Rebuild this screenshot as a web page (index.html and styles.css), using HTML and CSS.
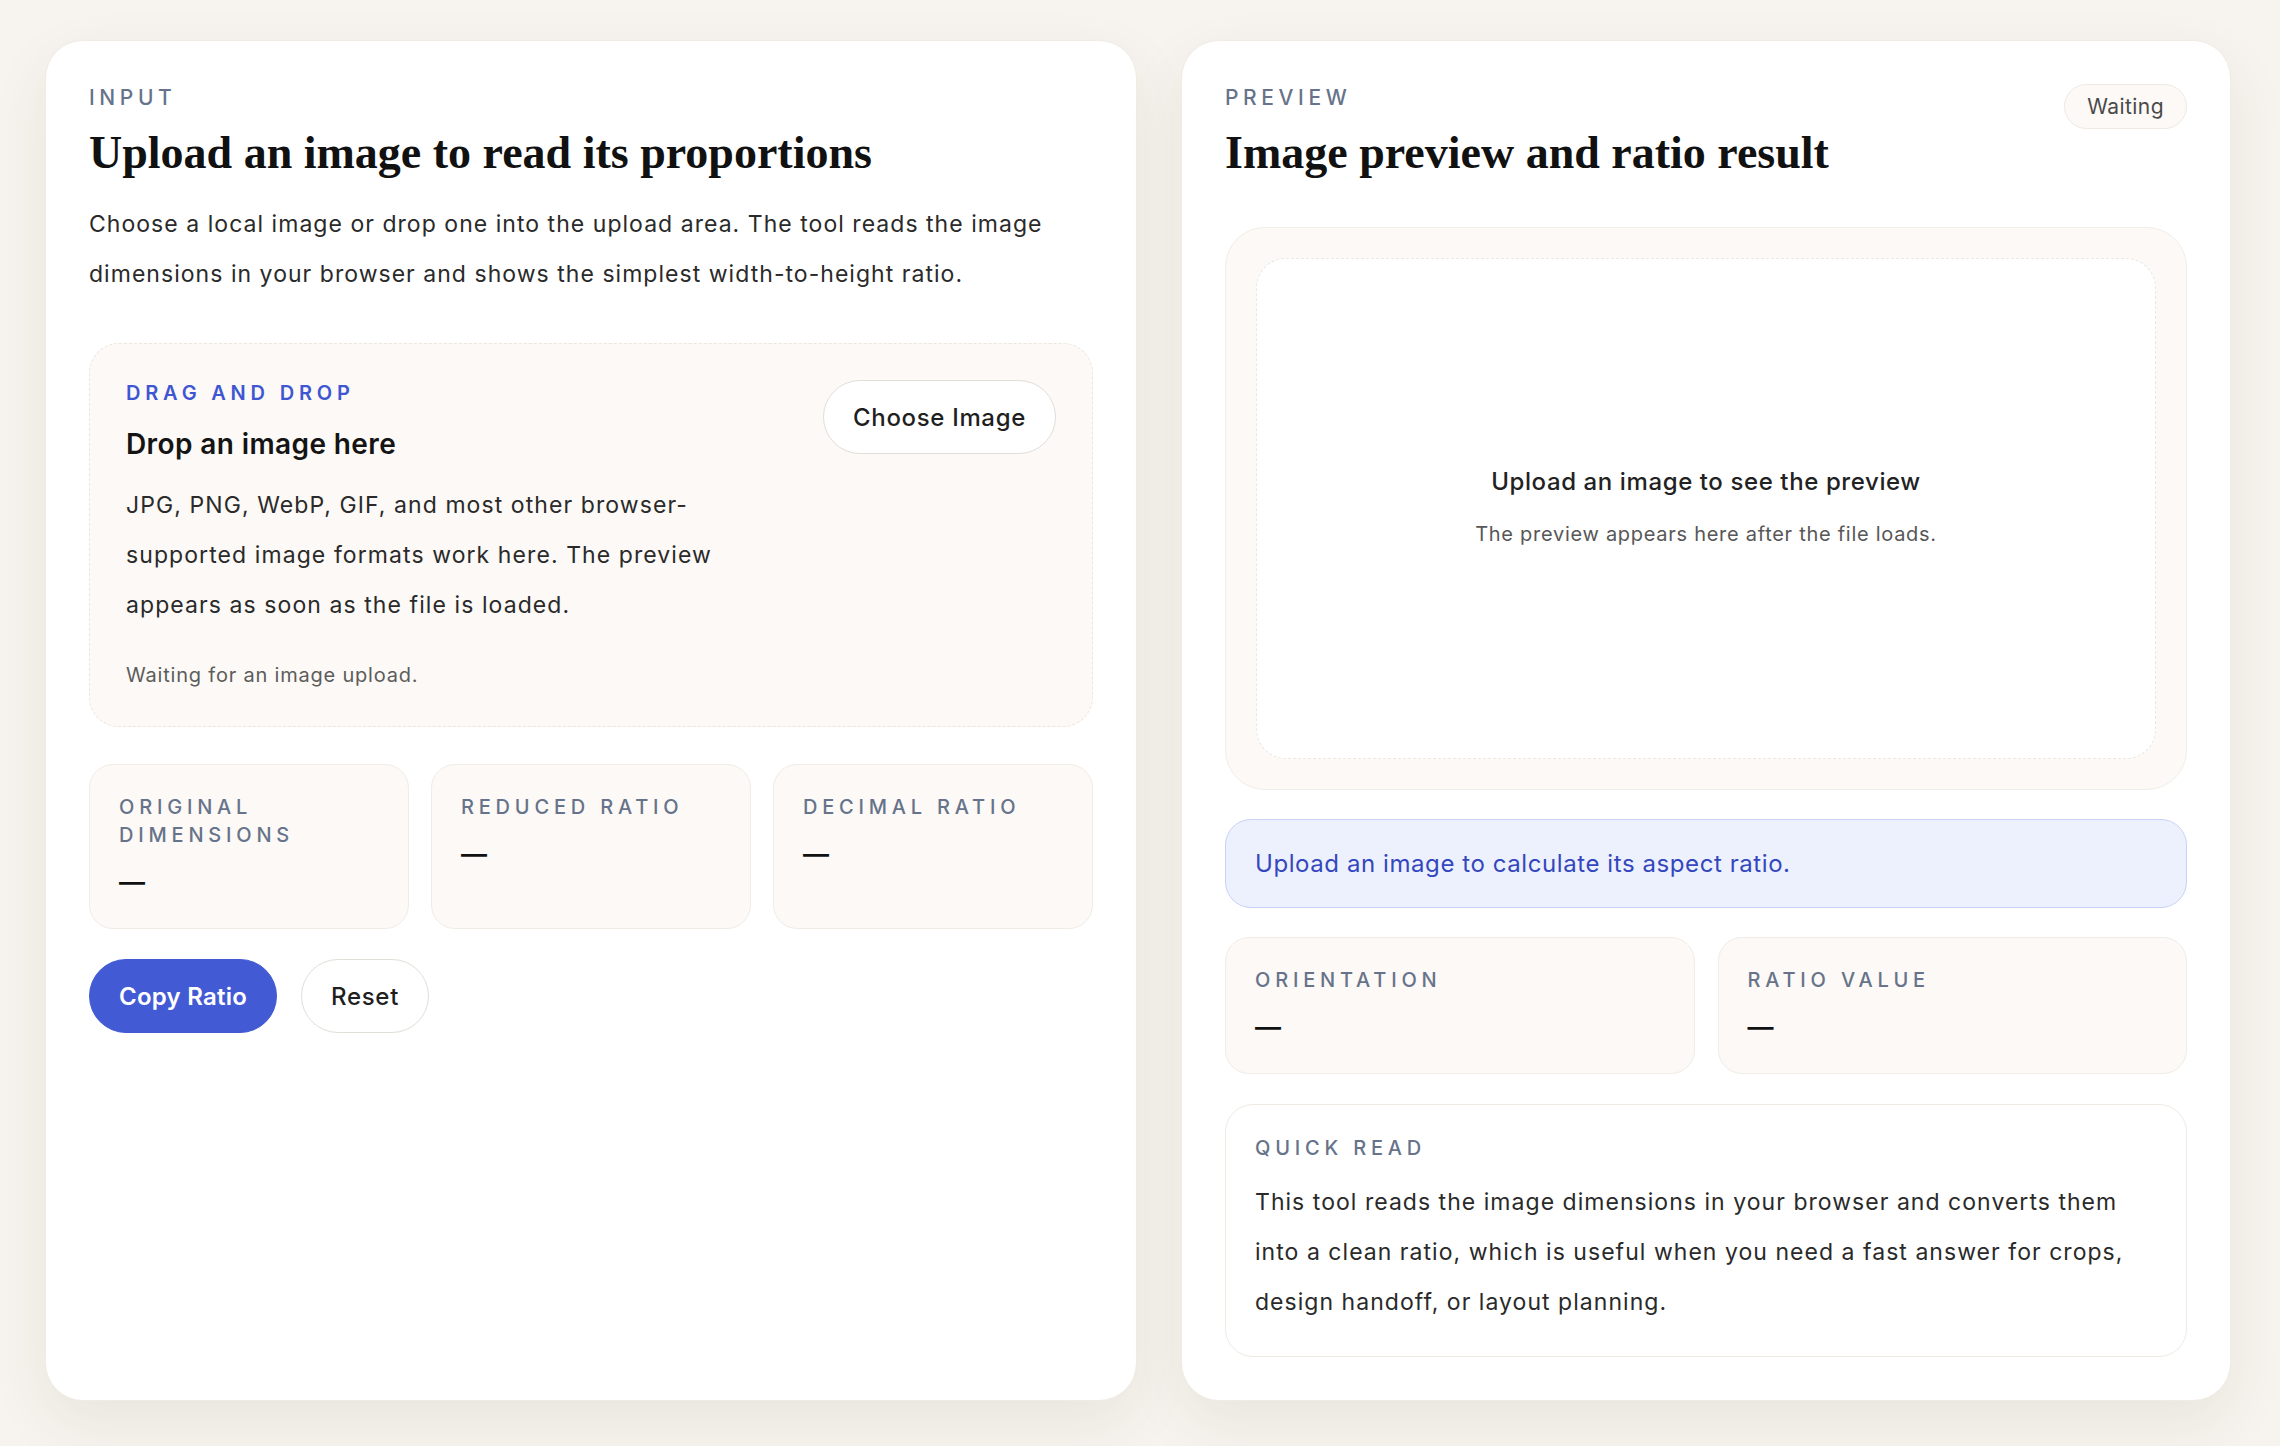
FILE: index.html
```html
<!DOCTYPE html>
<html>
<head>
  <title>Image Aspect Ratio Reader</title>
  <link rel="stylesheet" href="styles.css">
</head>
<body>
  <main class="layout">
    <section class="panel">
      <p class="eyebrow">Input</p>
      <h1 class="title">Upload an image to read its proportions</h1>
      <p class="lead">Choose a local image or drop one into the upload area. The tool reads the image dimensions in your browser and shows the simplest width-to-height ratio.</p>

      <div class="dropzone">
        <div class="dropzone-copy">
          <p class="drop-label">Drag and drop</p>
          <h3 class="drop-title">Drop an image here</h3>
          <p class="drop-text">JPG, PNG, WebP, GIF, and most other browser-supported image formats work here. The preview appears as soon as the file is loaded.</p>
          <p class="drop-status">Waiting for an image upload.</p>
        </div>
        <button class="btn btn-light">Choose Image</button>
      </div>

      <div class="stats stats-3">
        <div class="stat">
          <p class="stat-label">Original dimensions</p>
          <p class="stat-value">—</p>
        </div>
        <div class="stat">
          <p class="stat-label">Reduced ratio</p>
          <p class="stat-value">—</p>
        </div>
        <div class="stat">
          <p class="stat-label">Decimal ratio</p>
          <p class="stat-value">—</p>
        </div>
      </div>

      <div class="actions">
        <button class="btn btn-primary">Copy Ratio</button>
        <button class="btn btn-light">Reset</button>
      </div>
    </section>

    <section class="panel">
      <div class="panel-head">
        <div>
          <p class="eyebrow">Preview</p>
          <h2 class="title">Image preview and ratio result</h2>
        </div>
        <span class="badge">Waiting</span>
      </div>

      <div class="preview">
        <div class="preview-frame">
          <p class="preview-title">Upload an image to see the preview</p>
          <p class="preview-text">The preview appears here after the file loads.</p>
        </div>
      </div>

      <div class="notice">Upload an image to calculate its aspect ratio.</div>

      <div class="stats stats-2">
        <div class="stat">
          <p class="stat-label">Orientation</p>
          <p class="stat-value">—</p>
        </div>
        <div class="stat">
          <p class="stat-label">Ratio value</p>
          <p class="stat-value">—</p>
        </div>
      </div>

      <div class="note">
        <p class="stat-label">Quick read</p>
        <p class="note-text">This tool reads the image dimensions in your browser and converts them into a clean ratio, which is useful when you need a fast answer for crops, design handoff, or layout planning.</p>
      </div>
    </section>
  </main>
</body>
</html>
```

FILE: styles.css
```css
* {
  box-sizing: border-box;
}

body {
  margin: 0;
  background: #f7f4ef;
  color: #1c1c1c;
  font-family: 'Inter', 'Noto Sans', sans-serif;
}

p,
h1,
h2,
h3 {
  margin: 0;
}

.layout {
  display: grid;
  grid-template-columns: minmax(0, 1.04fr) minmax(0, 1fr);
  gap: 44px;
  padding: 40px 49px 46px 45px;
}

.panel {
  background: #fff;
  border: 1px solid #f0ebe3;
  border-radius: 38px;
  padding: 43px;
  box-shadow: 0 22px 60px rgba(70, 55, 30, 0.08);
}

.eyebrow {
  font-size: 21px;
  line-height: 27px;
  font-weight: 500;
  letter-spacing: 0.22em;
  text-transform: uppercase;
  color: #66738a;
}

.title {
  margin-top: 14px;
  font-family: 'Liberation Serif', 'Times New Roman', serif;
  font-weight: 700;
  font-size: 46px;
  line-height: 55px;
  color: #111;
}

.lead {
  margin-top: 19px;
  font-size: 23px;
  line-height: 50px;
  letter-spacing: 0.045em;
  color: #2a2a2a;
}

/* drop area */
.dropzone {
  display: flex;
  justify-content: space-between;
  align-items: flex-start;
  gap: 24px;
  margin-top: 44px;
  padding: 36px;
  background: #fcf9f6;
  border: 1px dashed #ece6dd;
  border-radius: 30px;
}

.dropzone-copy {
  max-width: 620px;
}

.drop-label {
  font-size: 20px;
  line-height: 26px;
  font-weight: 600;
  letter-spacing: 0.24em;
  text-transform: uppercase;
  color: #3f56d3;
}

.drop-title {
  margin-top: 20px;
  font-size: 28px;
  line-height: 36px;
  font-weight: 600;
  letter-spacing: 0.014em;
  color: #141414;
}

.drop-text {
  margin-top: 18px;
  font-size: 23px;
  line-height: 50px;
  letter-spacing: 0.047em;
  color: #2a2a2a;
}

.drop-status {
  margin-top: 30px;
  font-size: 20px;
  line-height: 30px;
  letter-spacing: 0.04em;
  color: #5c5c5c;
}

/* buttons */
.btn {
  height: 74px;
  padding: 0 29px;
  border-radius: 40px;
  font-family: inherit;
  font-size: 24px;
  font-weight: 500;
  letter-spacing: 0.028em;
  flex-shrink: 0;
  cursor: pointer;
}

.btn-light {
  background: #fff;
  border: 1px solid #e2ded8;
  color: #1f1f1f;
}

.btn-primary {
  background: #425bd5;
  border: 1px solid #425bd5;
  color: #fff;
  font-weight: 600;
  letter-spacing: 0.01em;
}

.actions {
  display: flex;
  gap: 24px;
  margin-top: 30px;
}

/* stat cards */
.stats {
  display: grid;
  margin-top: 37px;
}

.stats-3 {
  grid-template-columns: repeat(3, minmax(0, 1fr));
  gap: 22px;
}

.stats-2 {
  grid-template-columns: repeat(2, minmax(0, 1fr));
  gap: 23px;
  margin-top: 29px;
}

.stat {
  background: #fcf9f6;
  border: 1px solid #f1ece5;
  border-radius: 24px;
  padding: 28px 29px;
}

.stat-label {
  font-size: 20px;
  line-height: 28px;
  font-weight: 500;
  letter-spacing: 0.24em;
  text-transform: uppercase;
  color: #66738a;
}

.stat-value {
  margin-top: 15px;
  font-size: 26px;
  line-height: 36px;
  font-weight: 600;
  color: #111;
}

/* preview side */
.panel-head {
  display: flex;
  justify-content: space-between;
  align-items: flex-start;
}

.badge {
  padding: 9px 22px;
  font-size: 21px;
  line-height: 25px;
  letter-spacing: 0.02em;
  color: #4a4a4a;
  background: #fcf9f6;
  border: 1px solid #efe9e1;
  border-radius: 30px;
}

.preview {
  margin-top: 47px;
  padding: 30px;
  background: #fcf9f6;
  border: 1px solid #f2ede6;
  border-radius: 40px;
}

.preview-frame {
  display: flex;
  flex-direction: column;
  justify-content: center;
  align-items: center;
  min-height: 501px;
  padding-bottom: 4px;
  background: #fff;
  border: 1px dashed #ece7df;
  border-radius: 30px;
  text-align: center;
}

.preview-title {
  font-size: 24px;
  line-height: 34px;
  font-weight: 500;
  letter-spacing: 0.025em;
  color: #222;
}

.preview-text {
  margin-top: 20px;
  font-size: 20px;
  line-height: 30px;
  letter-spacing: 0.036em;
  color: #575757;
}

.notice {
  margin-top: 29px;
  padding: 25px 29px;
  font-size: 24px;
  line-height: 37px;
  letter-spacing: 0.024em;
  color: #3447bd;
  background: #edf1fd;
  border: 1px solid #c9d2f5;
  border-radius: 26px;
}

.note {
  margin-top: 30px;
  padding: 29px;
  background: #fff;
  border: 1px solid #efeae2;
  border-radius: 28px;
}

.note-text {
  margin-top: 15px;
  font-size: 23px;
  line-height: 50px;
  letter-spacing: 0.045em;
  color: #2a2a2a;
}
```
